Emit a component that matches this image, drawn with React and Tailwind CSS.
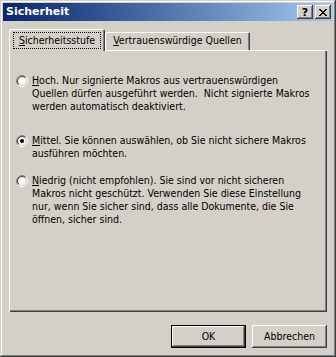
import React from "react";

const FONT = { fontFamily: '"DejaVu Sans Condensed", "DejaVu Sans", sans-serif' };
const TITLE_FONT = { fontFamily: '"DejaVu Sans", sans-serif' };

function Radio({ checked }) {
  const r1 = 5.5, r2 = 4.5, c = 6, k = 0.7071;
  const pt = (r, sx, sy) => `${c + sx * r * k} ${c + sy * r * k}`;
  return (
    <svg width="12" height="12" viewBox="0 0 12 12" className="shrink-0">
      <circle cx="6" cy="6" r="4" fill="#ffffff" />
      <path d={`M${pt(r1, -1, 1)} A${r1} ${r1} 0 0 1 ${pt(r1, 1, -1)}`} stroke="#808080" fill="none" />
      <path d={`M${pt(r1, 1, -1)} A${r1} ${r1} 0 0 1 ${pt(r1, -1, 1)}`} stroke="#ffffff" fill="none" />
      <path d={`M${pt(r2, -1, 1)} A${r2} ${r2} 0 0 1 ${pt(r2, 1, -1)}`} stroke="#404040" fill="none" />
      <path d={`M${pt(r2, 1, -1)} A${r2} ${r2} 0 0 1 ${pt(r2, -1, 1)}`} stroke="#d4d0c8" fill="none" />
      {checked && <circle cx="6" cy="6" r="2" fill="#000000" />}
    </svg>
  );
}

function Option({ checked, lines, className = "" }) {
  return (
    <div className={"flex items-start gap-[4px] " + className}>
      <div className="pt-[1px]">
        <Radio checked={checked} />
      </div>
      <div className="flex flex-col text-[10.5px] text-black">
        {lines.map((l, i) => (
          <div key={i} className="h-[13px] leading-[13px] whitespace-pre">
            {l}
          </div>
        ))}
      </div>
    </div>
  );
}

function TitleButton({ children }) {
  return (
    <div className="w-[16px] h-[14px] bg-[#d4d0c8] flex items-center justify-center shadow-[inset_-1px_-1px_#404040,inset_1px_1px_#ffffff,inset_-2px_-2px_#808080]">
      {children}
    </div>
  );
}

function Button({ children, isDefault }) {
  if (isDefault) {
    return (
      <div className="w-[75px] h-[23px] border border-black bg-[#d4d0c8] shadow-[inset_-1px_-1px_#404040,inset_1px_1px_#ffffff,inset_-2px_-2px_#808080] flex items-center justify-center text-[10.5px] text-black">
        {children}
      </div>
    );
  }
  return (
    <div className="w-[75px] h-[23px] bg-[#d4d0c8] shadow-[inset_-1px_-1px_#404040,inset_1px_1px_#ffffff,inset_-2px_-2px_#808080] flex items-center justify-center text-[10.5px] text-black">
      {children}
    </div>
  );
}

export default function App() {
  return (
    <div
      style={FONT}
      className="w-[336px] h-[357px] bg-[#d4d0c8] p-[3px] flex flex-col shadow-[inset_-1px_-1px_#404040,inset_1px_1px_#d4d0c8,inset_-2px_-2px_#808080,inset_2px_2px_#ffffff]"
    >
      <div className="h-[18px] shrink-0 bg-gradient-to-r from-[#0a246a] to-[#a6caf0] flex items-center pl-[2px] pr-[2px]">
        <div style={TITLE_FONT} className="flex-1 text-white font-bold text-[11px] leading-[18px] pl-[1px]">
          Sicherheit
        </div>
        <div className="flex gap-[2px]">
          <TitleButton>
            <span style={TITLE_FONT} className="text-[11px] font-bold leading-none text-black mt-[1px]">?</span>
          </TitleButton>
          <TitleButton>
            <svg width="8" height="7" viewBox="0 0 8 7" shapeRendering="crispEdges">
              <path d="M0 0h2v1h-2zM6 0h2v1h-2zM1 1h2v1h-2zM5 1h2v1h-2zM2 2h4v1h-4zM3 3h2v1h-2zM2 4h4v1h-4zM1 5h2v1h-2zM5 5h2v1h-2zM0 6h2v1h-2zM6 6h2v1h-2z" fill="#000" />
            </svg>
          </TitleButton>
        </div>
      </div>

      <div className="flex-1 flex flex-col px-[6px] pt-[8px] pb-[6px]">
        <div className="flex items-end h-[21px] shrink-0">
          <div className="relative z-10 w-[96px] h-[22px] mb-[-1px] bg-[#d4d0c8] rounded-t-[2px] shadow-[inset_1px_1px_#ffffff,inset_-1px_0_#404040,inset_-2px_0_#808080] flex items-start justify-center pt-[3px]">
            <div className="w-[88px] border border-dotted border-black h-[17px] flex items-center justify-center text-[10.5px] text-black leading-none">
              <span><u>S</u>icherheitsstufe</span>
            </div>
          </div>
          <div className="w-[145px] h-[18px] bg-[#d4d0c8] rounded-t-[2px] shadow-[inset_1px_1px_#ffffff,inset_-1px_0_#404040,inset_-2px_0_#808080] flex items-center justify-center text-[10.5px] text-black leading-none pb-[1px]">
            <span><u>V</u>ertrauenswürdige Quellen</span>
          </div>
        </div>
        <div className="h-[262px] shrink-0 bg-[#d4d0c8] shadow-[inset_1px_1px_#ffffff,inset_-1px_-1px_#404040,inset_-2px_-2px_#808080] pl-[7px] pt-[24px]">
          <Option
            checked={false}
            lines={[
              <><u>H</u>och. Nur signierte Makros aus vertrauenswürdigen</>,
              "Quellen dürfen ausgeführt werden.  Nicht signierte Makros",
              "werden automatisch deaktiviert.",
            ]}
          />
          <Option
            checked={true}
            className="mt-[21px]"
            lines={[
              <><u>M</u>ittel. Sie können auswählen, ob Sie nicht sichere Makros</>,
              "ausführen möchten.",
            ]}
          />
          <Option
            checked={false}
            className="mt-[14px]"
            lines={[
              <><u>N</u>iedrig (nicht empfohlen). Sie sind vor nicht sicheren</>,
              "Makros nicht geschützt. Verwenden Sie diese Einstellung",
              "nur, wenn Sie sicher sind, dass alle Dokumente, die Sie",
              "öffnen, sicher sind.",
            ]}
          />
        </div>
        <div className="flex justify-end gap-[6px] mt-[13px]">
          <Button isDefault>OK</Button>
          <Button>Abbrechen</Button>
        </div>
      </div>
    </div>
  );
}
